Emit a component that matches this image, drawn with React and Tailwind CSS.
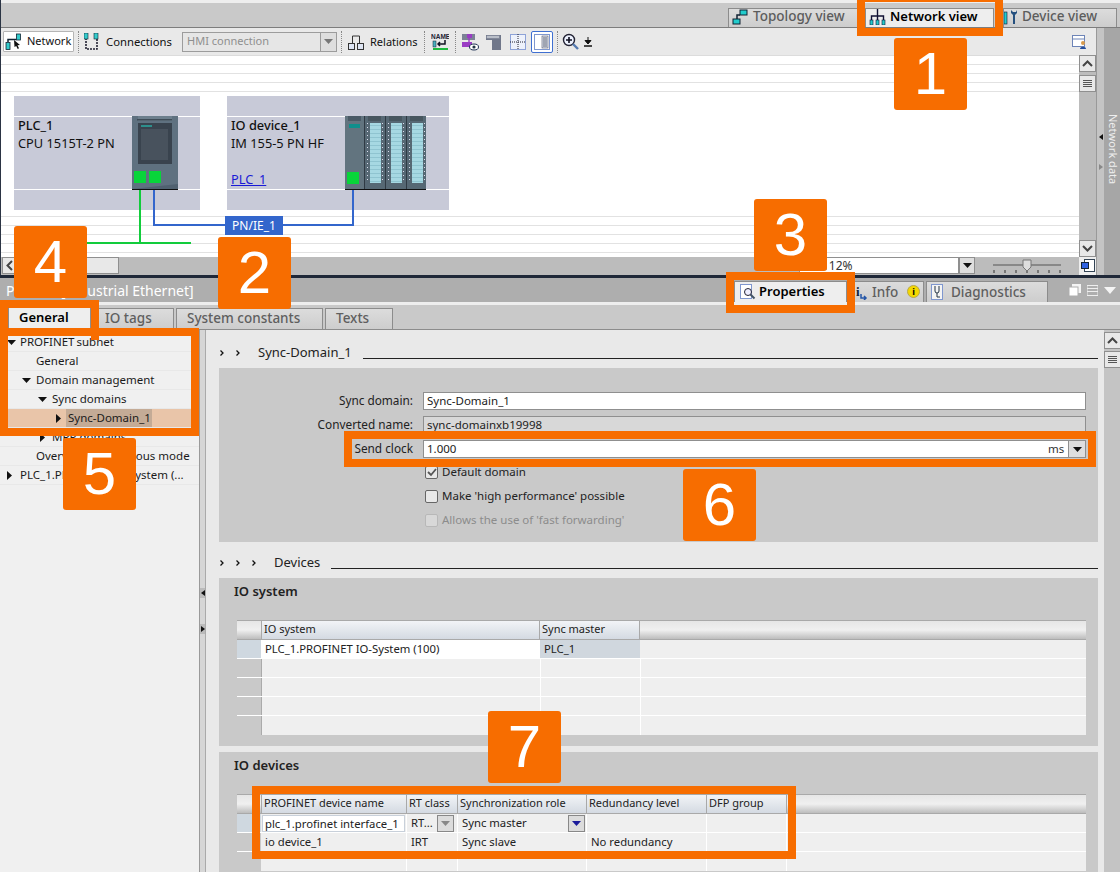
import React from 'react'

const FONT = { fontFamily: '"Noto Sans", sans-serif' }

function Callout({ n, className }) {
  return (
    <div className={`absolute w-[73px] h-[72px] rounded-[3px] bg-[#f76d00] text-white flex items-center justify-center text-[60px] leading-none font-['Liberation_Sans'] ${className}`}>
      {n}
    </div>
  )
}

function Frame({ className }) {
  return <div className={`absolute border-[8px] border-[#f76d00] pointer-events-none ${className}`} />
}

function NetIcon() {
  return (
    <svg width="17" height="17" viewBox="0 0 17 17" className="shrink-0">
      <path d="M3 9V6.500h8" fill="none" stroke="#123" strokeWidth="1.500" />
      <rect x="1" y="9.500" width="4" height="7" fill="#3cc" stroke="#123" strokeWidth=".8" />
      <rect x="11.500" y="1" width="4" height="6" fill="#3cc" stroke="#123" strokeWidth=".8" />
      <path d="M9 7l6 5-2.500.3 1.500 3-1.300.7-1.500-3L9.500 14z" fill="#111" />
    </svg>
  )
}

function ToolIcon({ kind, active }) {
  const box = active ? 'border border-[#3f6fd1] bg-white rounded-[2px]' : ''
  return (
    <div className={`w-[22px] h-[22px] flex items-center justify-center ${box}`}>
      <svg width="18" height="18" viewBox="0 0 18 18">
        {kind === 'name' && (
          <>
            <text x="0" y="6" fontSize="6.500" fontWeight="700" fill="#223" fontFamily="Liberation Sans">NAME</text>
            <path d="M14 7v4H7M9 9l-2 2 2 2" fill="none" stroke="#112" strokeWidth="1.500" />
            <rect x="2" y="8" width="3" height="6" fill="#4ab0c0" stroke="#123" strokeWidth=".5" />
            <rect x="2" y="15" width="15" height="2" fill="#1fb93f" />
          </>
        )}
        {kind === 'overlay' && (
          <>
            <rect x="1" y="1" width="13" height="6" fill="#7c8296" />
            <rect x="6" y="1" width="5" height="4" fill="#9a3cc4" />
            <rect x="1" y="9" width="10" height="5" fill="#9a3cc4" />
            <path d="M8 5v4" stroke="#9a3cc4" strokeWidth="1.400" fill="none" />
            <ellipse cx="13" cy="14" rx="4.500" ry="3" fill="#fff" stroke="#235" />
            <circle cx="13" cy="14" r="1.600" fill="#234" />
          </>
        )}
        {kind === 'page' && (
          <>
            <path d="M1 2h15v15H7V7H1z" fill="#70778a" />
            <rect x="1.500" y="2.500" width="13" height="3" fill="#b9bec8" stroke="#70778a" strokeWidth=".5" />
          </>
        )}
        {kind === 'grid' && (
          <>
            <rect x="1.500" y="1.500" width="15" height="15" fill="#eef2fb" stroke="#8ea3d8" />
            <path d="M1 9h16M9 1v16" stroke="#223" strokeDasharray="1 1" />
          </>
        )}
        {kind === 'panel' && (
          <>
            <rect x="1.500" y="1.500" width="15" height="15" fill="#fff" stroke="#7f97cf" />
            <rect x="9" y="3" width="6" height="12" fill="#dbe2ee" stroke="#556" strokeWidth="0.6" />
            <path d="M10 5h4M10 7h4M10 9h4M10 11h4M10 13h4" stroke="#334" strokeWidth="0.7" />
          </>
        )}
      </svg>
    </div>
  )
}

function Sep() {
  return <div className="w-px h-[22px] border-l border-dotted border-[#888] mx-[4px]" />
}

function ViewTab({ icon, label, active, className }) {
  return (
    <div className={`h-[19px] flex items-center pb-[3px] border border-b-0 border-[#8c8c8c] whitespace-nowrap ${active ? 'bg-[#eeeeee] text-black font-semibold text-[13px]' : 'bg-gradient-to-b from-[#dcdcdc] to-[#cdcdcd] text-[#5c5c5c] font-medium text-[13.5px]'} ${className}`}>
      {icon}
      <span>{label}</span>
    </div>
  )
}

function Topology() {
  return (
    <svg width="16" height="16" viewBox="0 0 16 16" className="ml-[3px] mr-[5px] shrink-0">
      <rect x="8" y="1" width="7" height="5" fill="#2cc" stroke="#123" />
      <rect x="1" y="10" width="7" height="5" fill="#2cc" stroke="#123" />
      <path d="M5 10V6h3" fill="none" stroke="#123" strokeWidth="1.500" />
    </svg>
  )
}

function NetTree() {
  return (
    <svg width="17" height="16" viewBox="0 0 17 16" className="ml-[3px] mr-[4px] shrink-0">
      <path d="M8.500 0v7M2.500 12V7h12v5M8.500 7v5" stroke="#113" strokeWidth="1.400" fill="none" />
      <rect x="1" y="11" width="3" height="5" fill="#2cc" stroke="#113" strokeWidth="0.6" />
      <rect x="7" y="11" width="3" height="5" fill="#2cc" stroke="#113" strokeWidth="0.6" />
      <rect x="13" y="11" width="3" height="5" fill="#2cc" stroke="#113" strokeWidth="0.6" />
    </svg>
  )
}

function Wrench() {
  return (
    <svg width="16" height="16" viewBox="0 0 16 16" className="mr-[2px] shrink-0">
      <rect x="0" y="3" width="3" height="12" fill="#2cc" stroke="#113" strokeWidth="0.6" />
      <path d="M7 1v3l2 2v9h2V6l2-2V1l-1 2h-3z" fill="#25507f" />
    </svg>
  )
}

function PlcModule() {
  return (
    <svg width="46" height="74" viewBox="0 0 46 74" className="absolute left-[132px] top-[116px]">
      <rect width="46" height="74" fill="#5f7180" />
      <rect x="6" y="0" width="34" height="5" fill="#6d7f8d" />
      <rect x="5" y="3" width="35" height="1.500" fill="#3f4c57" />
      <rect x="6" y="7" width="34" height="41" fill="#39434e" />
      <rect x="9" y="13" width="27" height="31" fill="#48525d" />
      <rect x="9" y="9" width="11" height="2" fill="#2d8f8c" />
      <rect x="2" y="55" width="12" height="12" fill="#08d53a" />
      <rect x="17" y="55" width="12" height="12" fill="#08d53a" />
      <path d="M0 73l46-5v6H0z" fill="#506170" />
      <rect y="73" width="46" height="1" fill="#111" />
    </svg>
  )
}

const dotRows = Array.from({ length: 15 }, (_, i) => 7 + i * 4)

function IoModules() {
  return (
    <svg width="81" height="74" viewBox="0 0 81 74" className="absolute left-[345px] top-[116px]">
      <rect width="81" height="74" fill="#566874" />
      <rect x="0" y="0" width="19" height="73" fill="#62747f" />
      <rect x="3" y="0" width="13" height="5" fill="#4a5a66" />
      <rect x="4" y="8" width="11" height="4" fill="#0f8f8c" />
      <rect x="2" y="56" width="12" height="12" fill="#08d53a" />
      {[19, 40, 61].map(x => (
        <g key={x}>
          <rect x={x} y="0" width="1" height="74" fill="#2f3a44" />
          <rect x={x + 4} y="0" width="13" height="5" fill="#47565f" />
          <rect x={x + 6} y="7" width="11" height="60" fill="#a6d8e2" />
          {dotRows.map(y => (
            <g key={y}>
              <rect x={x + 3} y={y} width="1" height="1" fill="#dde" />
              <rect x={x + 18} y={y} width="1" height="1" fill="#dde" />
              <rect x={x + 6} y={y + 2} width="11" height="1" fill="#8fc4d0" />
            </g>
          ))}
        </g>
      ))}
      <rect y="73" width="81" height="1" fill="#111" />
    </svg>
  )
}

const canvasLines = [8, 17, 26, 35, 160, 169, 178, 187, 196]

function Canvas() {
  return (
    <div className="relative flex-1 bg-white overflow-hidden">
      {canvasLines.map(y => (
        <div key={y} className="absolute left-0 right-0 h-px bg-[#e2e2e2]" style={{ top: y }} />
      ))}
      <div className="absolute inset-0 top-[-56px] left-[-1px]">
        <DeviceBox className="left-[14px] w-[186px]" />
        <DeviceBox className="left-[227px] w-[222px]" />
        <PlcModule />
        <IoModules />
        <div className="absolute left-[18px] top-[116px] text-[12.8px] leading-[18px] text-[#111]">
          <div className="font-medium">PLC_1</div>
          <div>CPU 1515T-2 PN</div>
        </div>
        <div className="absolute left-[231px] top-[116px] text-[12.8px] leading-[18px] text-[#111]">
          <div className="font-medium">IO device_1</div>
          <div>IM 155-5 PN HF</div>
        </div>
        <div className="absolute left-[231px] top-[170px] text-[12.8px] leading-[18px] text-[#1a1ad6] underline">PLC_1</div>
        <div className="absolute left-[139px] top-[190px] w-[2px] h-[53px] bg-[#12cc3c]" />
        <div className="absolute left-[60px] top-[242px] w-[131px] h-[2px] bg-[#12cc3c]" />
        <div className="absolute left-[153px] top-[190px] w-[2px] h-[36px] bg-[#3366cc]" />
        <div className="absolute left-[153px] top-[224px] w-[201px] h-[2px] bg-[#3366cc]" />
        <div className="absolute left-[352px] top-[190px] w-[2px] h-[36px] bg-[#3366cc]" />
        <div className="absolute left-[225px] top-[216px] w-[58px] h-[19px] bg-[#3366cc] text-white text-[12px] flex items-center justify-center">PN/IE_1</div>
      </div>
    </div>
  )
}

function DeviceBox({ className }) {
  return (
    <div className={`absolute top-[96px] h-[114px] bg-[#c8cad8] ${className}`}>
      <div className="absolute left-0 right-0 top-[20px] h-px bg-white" />
      <div className="absolute left-0 right-0 top-[93px] h-px bg-white" />
    </div>
  )
}

function ScrollBtn({ children, className = '' }) {
  return (
    <div className={`w-[17px] h-[17px] bg-[#e8e8e8] border border-[#8f8f8f] flex items-center justify-center shrink-0 ${className}`}>
      {children}
    </div>
  )
}

const Up = () => <svg width="11" height="7" viewBox="0 0 11 7"><path d="M1 6l4.500-4.500L10 6" fill="none" stroke="#444" strokeWidth="2" /></svg>
const Down = () => <svg width="11" height="7" viewBox="0 0 11 7"><path d="M1 1l4.500 4.500L10 1" fill="none" stroke="#444" strokeWidth="2" /></svg>
const Grip = () => <svg width="9" height="8" viewBox="0 0 9 8"><path d="M0 .5h9M0 2.500h9M0 4.500h9M0 6.500h9" stroke="#555" /></svg>
const DropArrow = ({ color = '#111' }) => <svg width="9" height="5" viewBox="0 0 9 5"><path d="M0 0h9L4.500 5z" fill={color} /></svg>

function TopPane() {
  return (
    <div className="h-[275px] flex flex-col shrink-0 border-l border-[#2b3444]">
      <div className="h-[3px] bg-[#eeeeee]" />
      <div className="h-[25px] bg-[#c9c9c9] border-b border-[#7d7d7d] flex items-end">
        <div className="flex-1" />
        <ViewTab icon={<Topology />} label="Topology view" className="w-[130px]" />
        <div className="w-[7px]" />
        <ViewTab icon={<NetTree />} label="Network view" active className="w-[129px]" />
        <div className="w-[9px]" />
        <ViewTab icon={<Wrench />} label="Device view" className="w-[114px] mr-[3px]" />
      </div>
      <div className="flex flex-1 min-h-0">
        <div className="flex-1 flex flex-col min-w-0">
          <div className="h-[28px] bg-[#e9e9e9] border-b border-[#dcdcdc] flex items-center pl-[2px] text-[11px] text-[#111]">
            <div className="h-[21px] w-[71px] bg-white border border-[#b5b5b5] rounded-[1px] flex items-center gap-[5px] pl-[1px]">
              <NetIcon />
              <span>Network</span>
            </div>
            <Sep />
            <svg width="15" height="18" viewBox="0 0 15 18" className="ml-[1px]"><path d="M2 5v11h11V5" fill="none" stroke="#223" strokeWidth="1.600" strokeDasharray="2 1" /><rect x="0" y="0" width="4" height="6" fill="#3cc" stroke="#123" strokeWidth=".6" /><rect x="10" y="0" width="4" height="6" fill="#3cc" stroke="#123" strokeWidth=".6" /></svg>
            <span className="ml-[7px] w-[76px] pt-[1px] text-[11.3px]">Connections</span>
            <div className="w-[155px] h-[20px] bg-[#e6e6e6] border border-[#9c9c9c] flex items-center justify-between text-[#8f8f8f]">
              <span className="pl-[4px]">HMI connection</span>
              <div className="w-[16px] h-[18px] border-l border-[#9c9c9c] bg-[#dedede] flex items-center justify-center"><DropArrow color="#777" /></div>
            </div>
            <Sep />
            <svg width="16" height="18" viewBox="0 0 16 18" className="ml-[2px]"><path d="M4.500 10V3h7v7" fill="none" stroke="#333" /><rect x=".5" y="10.500" width="6" height="6" fill="#dfe6f4" stroke="#333" /><rect x="9.500" y="10.500" width="6" height="6" fill="#dfe6f4" stroke="#333" /></svg>
            <span className="ml-[6px] w-[50px] pt-[1px]">Relations</span>
            <Sep />
            <ToolIcon kind="name" />
            <Sep />
            <div className="flex gap-[2px] ml-[-1px]">
              <ToolIcon kind="overlay" />
              <ToolIcon kind="page" />
              <ToolIcon kind="grid" />
              <ToolIcon kind="panel" active />
            </div>
            <Sep />
            <svg width="17" height="17" viewBox="0 0 17 17"><circle cx="7" cy="7" r="5.500" fill="#eef3ff" stroke="#223" strokeWidth="1.400" /><path d="M4 7h6M7 4v6" stroke="#112" strokeWidth="1.600" /><path d="M11 11l5 5" stroke="#557ab0" strokeWidth="2.400" /></svg>
            <svg width="8" height="10" viewBox="0 0 8 10" className="ml-[5px]"><path d="M4 0v5M1 3.500L4 7l3-3.500z" fill="#111" stroke="#111" /><path d="M0 9h8" stroke="#111" strokeWidth="1.500" /></svg>
            <div className="flex-1" />
            <svg width="16" height="16" viewBox="0 0 16 16" className="mr-[8px]"><rect x=".5" y="1.500" width="12" height="11" fill="#fff" stroke="#6d84b7" /><path d="M1 5h11" stroke="#6d84b7" /><circle cx="11" cy="9" r="2" fill="#d89a4a" /><path d="M8 15c0-3 6-3 6 0z" fill="#234e9e" /></svg>
          </div>
          <div className="flex flex-1 min-h-0">
            <Canvas />
            <div className="w-[17px] bg-[#bcbcbc] flex flex-col items-center">
              <ScrollBtn className="mt-[-1px]"><Up /></ScrollBtn>
              <ScrollBtn className="mt-[3px]"><Grip /></ScrollBtn>
              <div className="flex-1" />
              <ScrollBtn><Down /></ScrollBtn>
            </div>
          </div>
          <div className="h-[18px] flex bg-[#bcbcbc]">
            <div className="w-[117px] h-[17px] bg-[#e8e8e8] border border-[#8f8f8f] ml-[1px] flex items-center pl-[3px]">
              <svg width="7" height="11" viewBox="0 0 7 11"><path d="M6 1L1.500 5.500 6 10" fill="none" stroke="#444" strokeWidth="2" /></svg>
            </div>
            <div className="flex-1" />
            <div className="w-[160px] h-[17px] bg-white border border-[#8f8f8f] text-[12px] leading-[16px] text-[#333] pl-[22px]">112%</div>
            <div className="w-[16px] h-[17px] bg-[#dedede] border border-[#8f8f8f] flex items-center justify-center"><DropArrow /></div>
            <svg width="68" height="17" viewBox="0 0 68 17" className="ml-[18px]">
              <path d="M0 8h68" stroke="#555" />
              <path d="M1 13v3M12 13v3M23 13v3M34 13v3M45 13v3M56 13v3M67 13v3" stroke="#333" />
              <path d="M30 3h8v7l-4 4-4-4z" fill="#ddd" stroke="#777" />
            </svg>
            <div className="w-[17px] bg-[#eeeeee] ml-[18px] flex items-center justify-center">
              <svg width="14" height="14" viewBox="0 0 14 14"><rect x="3.500" y=".5" width="10" height="12" fill="#fff" stroke="#345" /><rect x=".5" y="3.500" width="7" height="6" fill="#2f62e0" stroke="#123" /></svg>
            </div>
          </div>
        </div>
        <div className="w-[8px] bg-[#c4c4c4] flex flex-col items-center justify-center gap-[24px] border-l border-[#999]">
          <svg width="4" height="6" viewBox="0 0 4 6"><path d="M4 0v6L0 3z" fill="#111" /></svg>
          <svg width="4" height="6" viewBox="0 0 4 6"><path d="M0 0v6l4-3z" fill="#888" /></svg>
        </div>
        <div className="w-[16px] bg-[#a6a6a6] flex items-start justify-center pt-[86px] pl-[2px]">
          <span className="text-[11px] leading-[13px] text-[#eeeeee] [writing-mode:vertical-rl] whitespace-nowrap">Network data</span>
        </div>
      </div>
    </div>
  )
}

function BottomTab({ icon, label, active, className }) {
  return (
    <div className={`h-[21px] flex items-center border border-b-0 border-[#8c8c8c] whitespace-nowrap ${active ? 'bg-[#eeeeee] text-black font-semibold text-[13px]' : 'bg-gradient-to-b from-[#dcdcdc] to-[#cdcdcd] text-[#5f5f5f] font-medium text-[13.5px]'} ${className}`}>
      {icon}
      {label}
    </div>
  )
}

const tree = [
  { t: 'PROFINET subnet', x: 20, arrow: 'down', ax: 7, cls: '[word-spacing:-1px]' },
  { t: 'General', x: 36 },
  { t: 'Domain management', x: 36, arrow: 'down', ax: 22 },
  { t: 'Sync domains', x: 52, arrow: 'down', ax: 38 },
  { t: 'Sync-Domain_1', x: 68, arrow: 'right', ax: 56, selected: true },
  { t: 'MRP domains', x: 52, arrow: 'right', ax: 40 },
  { t: 'Overview isochronous mode', x: 36 },
  { t: 'PLC_1.PROFINET IO-System (...', x: 20, arrow: 'right', ax: 7 },
]

function Tree() {
  return (
    <div className="w-[200px] bg-[#f0f0f0] border-r border-[#9a9a9a] pt-[3px] shrink-0 text-[11.5px] text-[#1a1a1a]">
      {tree.map(r => (
        <div key={r.t} className={`relative h-[19px] flex items-center border-b border-[#e8e8e8] ${r.selected ? 'bg-[#e9c5a9]' : ''}`}>
          {r.arrow === 'down' && <div className="absolute" style={{ left: r.ax, top: 7 }}><svg width="9" height="5" viewBox="0 0 9 5"><path d="M0 0h9L4.500 5z" fill="#111" /></svg></div>}
          {r.arrow === 'right' && <div className="absolute" style={{ left: r.ax, top: 5 }}><svg width="5" height="9" viewBox="0 0 5 9"><path d="M0 0v9l5-4.500z" fill="#111" /></svg></div>}
          <span className={`absolute whitespace-nowrap ${r.cls || ''} ${r.selected ? 'bg-[#c4ab96] pl-[2px] pr-[1px] h-[18px] leading-[18px] ml-[-2px]' : ''}`} style={{ left: r.x }}>{r.t}</span>
        </div>
      ))}
    </div>
  )
}

function Chevron() {
  return <svg width="4" height="6" viewBox="0 0 4 6"><path d="M.5 .5L3 3 .5 5.500" fill="none" stroke="#111" strokeWidth="1.300" /></svg>
}

function SectionHead({ chevrons, label, className = '' }) {
  return (
    <div className={`flex items-end h-[20px] -ml-[13px] pl-[14px] pr-[6px] ${className}`}>
      <div className="flex gap-[12px] items-center h-[20px] pt-[1px]">
        {Array.from({ length: chevrons }).map((_, i) => <Chevron key={i} />)}
      </div>
      <span className="ml-[18px] text-[13px] leading-[20px] text-[#222]">{label}</span>
      <div className="flex-1 ml-[11px] mb-[3px] h-px bg-[#222]" />
    </div>
  )
}

function FormRow({ label, className = '', children }) {
  return (
    <div className={`flex items-center ${className}`}>
      <label className="w-[194px] mr-[10px] text-right text-[11.8px] text-[#222] whitespace-nowrap">{label}</label>
      {children}
    </div>
  )
}

function Check({ label, checked, muted }) {
  return (
    <div className="flex items-center h-[24px] pl-[206px]">
      <div className={`w-[13px] h-[13px] rounded-[2px] border flex items-center justify-center ${muted ? 'border-[#b8b8b8] bg-[#d8d8d8]' : 'border-[#666] bg-[#e8e8e8]'}`}>
        {checked && <svg width="10" height="9" viewBox="0 0 10 9"><path d="M1 4l3 3 5-6" fill="none" stroke="#555" strokeWidth="1.800" /></svg>}
      </div>
      <span className={`ml-[4px] text-[11.5px] ${muted ? 'text-[#8c8c8c]' : 'text-[#222]'}`}>{label}</span>
    </div>
  )
}

const headCell = 'h-[18px] flex items-center pl-[2px] pb-[1px] border-r border-[#a9a9a9] text-[11px] text-[#222] bg-gradient-to-b from-[#f2f4f7] to-[#d4dae2] whitespace-nowrap'
const headBand = 'flex border-t border-b border-[#a9a9a9] bg-gradient-to-b from-[#e6e6e6] via-[#f0f0f0] to-[#bdbdbd]'

function IoSystemTable() {
  return (
    <div className="ml-[18px] mr-[12px]">
      <div className={headBand}>
        <div className="w-[24px]" />
        <div className={`w-[279px] border-l ${headCell}`}>IO system</div>
        <div className={`w-[100px] ${headCell}`}>Sync master</div>
      </div>
      <div className="flex h-[19px] border-b border-white text-[11.3px] text-[#222]">
        <div className="w-[24px] bg-[#cfd8e0]" />
        <div className="w-[279px] bg-white pl-[4px] leading-[18px] whitespace-nowrap">PLC_1.PROFINET IO-System (100)</div>
        <div className="w-[100px] bg-[#d0d7de] pl-[4px] leading-[18px]">PLC_1</div>
        <div className="flex-1 bg-[#efefef]" />
      </div>
      {[0, 1, 2, 3].map(i => (
        <div key={i} className="flex h-[19px] border-b border-white last:border-b-0">
          <div className="w-[24px] bg-[#c9c9c9]" />
          <div className="w-[279px] bg-[#efefef] border-l border-[#aaaaaa]" />
          <div className="w-[100px] bg-[#efefef] border-l border-white" />
          <div className="flex-1 bg-[#efefef] border-l border-white" />
        </div>
      ))}
    </div>
  )
}

const devCols = ['w-[146px]', 'w-[51px]', 'w-[129px]', 'w-[120px]', 'w-[80px]']

function IoDevicesTable() {
  return (
    <div className="ml-[18px] mr-[12px]">
      <div className={headBand}>
        <div className="w-[24px]" />
        {['PROFINET device name', 'RT class', 'Synchronization role', 'Redundancy level', 'DFP group'].map((h, i) => (
          <div key={h} className={`${devCols[i]} ${headCell} ${i === 0 ? 'border-l' : ''}`}>{h}</div>
        ))}
      </div>
      <div className="flex h-[19px] border-b border-white text-[11.3px] text-[#222] bg-[#efefef]">
        <div className="w-[24px] bg-[#cfd8e0]" />
        <div className="w-[146px] flex items-center pl-[1px] border-r border-white"><div className="w-[143px] h-[17px] bg-white border border-[#c8d0da] pl-[2px] leading-[15px] whitespace-nowrap overflow-hidden">plc_1.profinet interface_1</div></div>
        <div className="w-[51px] flex items-center pl-[4px] border-r border-white">RT...<div className="ml-[4px] w-[17px] h-[17px] bg-[#dcdcdc] border border-[#888] flex items-center justify-center"><DropArrow color="#888" /></div></div>
        <div className="w-[129px] flex items-center pl-[4px] justify-between border-r border-white">Sync master<div className="w-[17px] h-[17px] bg-[#dcdcdc] border border-[#888] flex items-center justify-center mr-[1px]"><DropArrow color="#1a1a9a" /></div></div>
        <div className="w-[120px] border-r border-white" />
        <div className="w-[80px] border-r border-white" />
        <div className="flex-1" />
      </div>
      <div className="flex h-[19px] border-b border-white text-[11.3px] text-[#222] bg-[#efefef] leading-[18px]">
        <div className="w-[24px] bg-[#c9c9c9]" />
        <div className="w-[146px] pl-[4px] border-r border-white">io device_1</div>
        <div className="w-[51px] pl-[4px] border-r border-white">IRT</div>
        <div className="w-[129px] pl-[4px] border-r border-white">Sync slave</div>
        <div className="w-[120px] pl-[4px] border-r border-white whitespace-nowrap">No redundancy</div>
        <div className="w-[80px] border-r border-white" />
        <div className="flex-1" />
      </div>
      <div className="flex h-[19px] bg-[#efefef]">
        <div className="w-[24px] bg-[#c9c9c9]" />
        <div className="w-[146px] border-r border-white" />
        <div className="w-[51px] border-r border-white" />
        <div className="w-[129px] border-r border-white" />
        <div className="w-[120px] border-r border-white" />
        <div className="w-[80px] border-r border-white" />
      </div>
    </div>
  )
}

function BottomPane() {
  return (
    <div className="flex-1 flex flex-col min-h-0 border-t-[3px] border-[#1f2838]">
      <div className="h-[24px] bg-[#aeaeae] flex items-end shrink-0">
        <div className="pl-[6px] self-center text-[14px] text-white whitespace-nowrap w-[734px]">PN/IE_1 [Industrial Ethernet]</div>
        <BottomTab active label="Properties" className="w-[113px]" icon={
          <svg width="16" height="16" viewBox="0 0 16 16" className="ml-[5px] mr-[3px]"><rect x=".5" y=".5" width="11" height="14" fill="#fff" stroke="#7f97cf" /><circle cx="8" cy="8" r="3.500" fill="#eef" stroke="#223" /><path d="M10.500 10.500l4 4" stroke="#456" strokeWidth="2" /></svg>
        } />
        <div className="w-[3px]" />
        <BottomTab label="Info" className="w-[74px] relative" icon={
          <>
            <svg width="14" height="15" viewBox="0 0 14 15" className="ml-[4px] mr-[3px]"><text x="1" y="11" fontSize="13" fontWeight="700" fill="#123" fontFamily="Liberation Serif">i</text><path d="M6 9v4h5M9 11l2 2-2 2" stroke="#2456a8" fill="none" strokeWidth="1.500" /></svg>
            <div className="absolute left-[56px] top-[3px] w-[13px] h-[13px] rounded-full bg-[#f4d800] border border-[#b8a84a] flex items-center justify-center text-[9px] font-bold text-black leading-none">i</div>
          </>
        } />
        <div className="w-[2px]" />
        <BottomTab label="Diagnostics" className="w-[122px]" icon={
          <svg width="13" height="16" viewBox="0 0 13 16" className="ml-[4px] mr-[7px]"><rect x=".5" y=".5" width="11" height="15" fill="#f4f4f4" stroke="#7f97cf" /><path d="M4 2v5a2 2 0 004 0V2M6 9v4h3" fill="none" stroke="#234" /></svg>
        } />
        <div className="flex-1 flex items-center justify-end self-center gap-[6px] pr-[4px]">
          <svg width="12" height="12" viewBox="0 0 12 12"><rect x="3" y="0" width="9" height="9" fill="#f4f4f4" /><rect x="0" y="3" width="9" height="9" fill="#fff" stroke="#aeaeae" /></svg>
          <svg width="11" height="11" viewBox="0 0 11 11"><path d="M0 .5h11v10H0zM0 3.500h11M0 6.500h11" fill="none" stroke="#eee" /></svg>
          <svg width="12" height="7" viewBox="0 0 12 7"><path d="M0 0h12L6 7z" fill="#f4f4f4" /></svg>
        </div>
      </div>
      <div className="h-[3px] bg-[#eeeeee] shrink-0" />
      <div className="h-[25px] bg-[#c9c9c9] border-b border-[#8c8c8c] flex items-end gap-[2px] pl-[8px] shrink-0">
        <BottomTab active label={<span className="pl-[10px] pb-[1px]">General</span>} className="w-[83px] !border-t-0" />
        <BottomTab label={<span className="pl-[11px] pb-[1px]">IO tags</span>} className="w-[81px]" />
        <BottomTab label={<span className="pl-[10px] pb-[1px]">System constants</span>} className="w-[147px]" />
        <BottomTab label={<span className="pl-[10px] pb-[1px]">Texts</span>} className="w-[68px]" />
      </div>
      <div className="flex flex-1 min-h-0">
        <Tree />
        <div className="w-[6px] bg-[#d6d6d6] border-r border-[#aaa] shrink-0 flex flex-col items-center pt-[258px] gap-[26px]">
          <div className="w-[5px] h-[10px] bg-[#bbb] flex items-center justify-center"><svg width="4" height="6" viewBox="0 0 4 6"><path d="M4 0v6L0 3z" fill="#111" /></svg></div>
          <div className="w-[5px] h-[10px] bg-[#bbb] flex items-center justify-center"><svg width="4" height="6" viewBox="0 0 4 6"><path d="M0 0v6l4-3z" fill="#111" /></svg></div>
        </div>
        <div className="flex-1 bg-[#e9e9e9] min-w-0 pl-[13px] pt-[12px] overflow-hidden">
          <SectionHead chevrons={2} label="Sync-Domain_1" />
          <div className="mt-[6px] mr-[6px] h-[174px] bg-[#c9c9c9] pt-[24px]">
            <FormRow label="Sync domain:" className="h-[18px]">
              <div className="w-[663px] h-[18px] bg-white border border-[#8f8f8f] pl-[3px] text-[11.5px] leading-[16px] text-[#222]">Sync-Domain_1</div>
            </FormRow>
            <FormRow label="Converted name:" className="h-[18px] mt-[6px]">
              <div className="w-[663px] h-[18px] bg-[#d8d8d8] border border-[#8f8f8f] pl-[3px] text-[11.5px] leading-[16px] text-[#222]">sync-domainxb19998</div>
            </FormRow>
            <FormRow label="Send clock" className="h-[18px] mt-[6px]">
              <div className="w-[663px] h-[18px] bg-white border border-[#8f8f8f] pl-[3px] text-[11.5px] leading-[16px] text-[#222] flex">
                <span className="flex-1">1.000</span>
                <span className="w-[20px] text-[#333]">ms</span>
                <div className="w-[17px] h-[16px] bg-[#dedede] border-l border-[#8f8f8f] flex items-center justify-center"><DropArrow /></div>
              </div>
            </FormRow>
            <div className="mt-[2px]">
              <Check label="Default domain" checked />
              <Check label="Make 'high performance' possible" />
              <Check label="Allows the use of 'fast forwarding'" muted />
            </div>
          </div>
          <SectionHead chevrons={3} label="Devices" className="mt-[10px]" />
          <div className="mt-[6px] mr-[6px] h-[168px] bg-[#c9c9c9]">
            <div className="pl-[15px] pt-[4px] h-[42px] text-[13px] font-semibold text-[#222]">IO system</div>
            <IoSystemTable />
          </div>
          <div className="mt-[6px] mr-[6px] h-[120px] bg-[#c9c9c9]">
            <div className="pl-[15px] pt-[4px] h-[42px] text-[13px] font-semibold text-[#222]">IO devices</div>
            <IoDevicesTable />
          </div>
        </div>
        <div className="w-[16px] bg-[#c4c4c4] shrink-0 pt-[2px] flex flex-col gap-[2px]">
          <ScrollBtn><Up /></ScrollBtn>
          <ScrollBtn><Grip /></ScrollBtn>
        </div>
      </div>
    </div>
  )
}

export default function App() {
  return (
    <div className="relative w-[1120px] h-[872px] overflow-hidden flex flex-col bg-[#e9e9e9]" style={FONT}>
      <TopPane />
      <BottomPane />

      {/* numbered callouts on top of the screenshot */}
      <Frame className="left-[857px] top-[-6px] w-[146px] h-[42px]" />
      <Frame className="left-[726px] top-[272px] w-[129px] h-[41px]" />
      <Frame className="left-[0px] top-[300px] w-[99px] h-[40px] !border-b-0" />
      <Frame className="left-[0px] top-[328px] w-[199px] h-[108px]" />
      <Frame className="left-[344px] top-[431px] w-[752px] h-[36px]" />
      <Frame className="left-[252px] top-[786px] w-[544px] h-[73px]" />
      <Callout n="1" className="left-[894px] top-[38px]" />
      <Callout n="2" className="left-[218px] top-[237px]" />
      <Callout n="3" className="left-[754px] top-[199px]" />
      <Callout n="4" className="left-[14px] top-[226px]" />
      <Callout n="5" className="left-[63px] top-[438px]" />
      <Callout n="6" className="left-[683px] top-[469px]" />
      <Callout n="7" className="left-[488px] top-[711px]" />
    </div>
  )
}
